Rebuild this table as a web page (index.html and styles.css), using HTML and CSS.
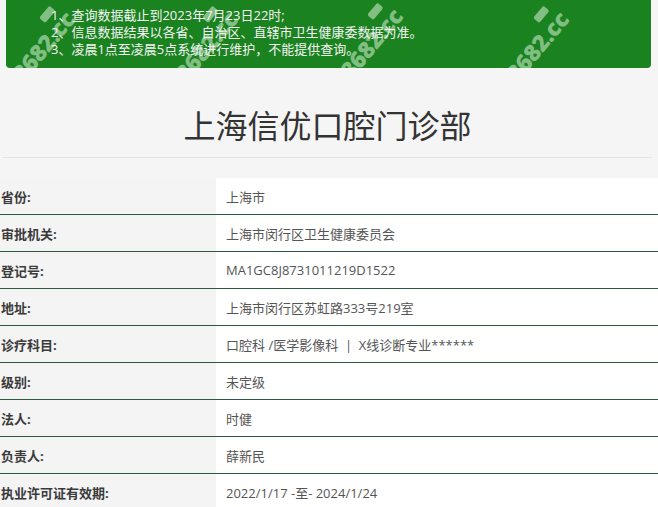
FILE: index.html
```html
<!DOCTYPE html>
<html lang="zh-CN">
<head>
<meta charset="utf-8">
<title>上海信优口腔门诊部</title>
<link rel="stylesheet" href="styles.css">
</head>
<body>
<div class="notice">
  <p>1、查询数据截止到2023年7月23日22时;</p>
  <p>2、信息数据结果以各省、自治区、直辖市卫生健康委数据为准。</p>
  <p>3、凌晨1点至凌晨5点系统进行维护，不能提供查询。</p>
  <span class="wm wm1" aria-hidden="true">8682.cc<i class="wm-badge"></i></span>
  <span class="wm wm2" aria-hidden="true">8682.cc<i class="wm-badge"></i></span>
  <span class="wm wm3" aria-hidden="true">8682.cc<i class="wm-badge"></i></span>
  <span class="wm wm4" aria-hidden="true">8682.cc<i class="wm-badge"></i></span>
</div>

<h1 class="title">上海信优口腔门诊部</h1>

<div class="info">
  <div class="row"><div class="label">省份:</div><div class="value">上海市</div></div>
  <div class="row"><div class="label">审批机关:</div><div class="value">上海市闵行区卫生健康委员会</div></div>
  <div class="row"><div class="label">登记号:</div><div class="value">MA1GC8J8731011219D1522</div></div>
  <div class="row"><div class="label">地址:</div><div class="value">上海市闵行区苏虹路333号219室</div></div>
  <div class="row"><div class="label">诊疗科目:</div><div class="value">口腔科 /医学影像科 &nbsp;| &nbsp;X线诊断专业******</div></div>
  <div class="row"><div class="label">级别:</div><div class="value">未定级</div></div>
  <div class="row"><div class="label">法人:</div><div class="value">时健</div></div>
  <div class="row"><div class="label">负责人:</div><div class="value">薛新民</div></div>
  <div class="row"><div class="label">执业许可证有效期:</div><div class="value">2022/1/17 -至- 2024/1/24</div></div>
</div>
</body>
</html>
```

FILE: styles.css
```css
html, body {
  margin: 0;
  padding: 0;
}
body {
  background: #f5f5f5;
  font-family: "Open Sans", "Noto Sans CJK SC", sans-serif;
  font-size: 13px;
  color: #333;
}
.notice {
  position: relative;
  overflow: hidden;
  margin: 0 7px 0 6px;
  padding: 7px 0 10px 45px;
  background: #1b8220;
  border-radius: 0 0 4px 4px;
  color: #f4f4f4;
  line-height: 17px;
}
.notice p {
  margin: 0;
  position: relative;
  z-index: 1;
}
.wm {
  position: absolute;
  font-family: "Open Sans", sans-serif;
  font-weight: 800;
  font-size: 23px;
  line-height: 24px;
  color: rgba(200, 232, 198, 0.6);
  transform: rotate(-50deg);
  transform-origin: center;
  white-space: nowrap;
  letter-spacing: -0.5px;
}
.wm-badge {
  position: absolute;
  right: 6px;
  top: -9px;
  width: 16px;
  height: 8px;
  border-radius: 2px;
  background: rgba(200, 232, 198, 0.6);
}
.wm1 { left: -4px; top: 34px; }
.wm2 { left: 159px; top: 34px; }
.wm3 { left: 324px; top: 31px; }
.wm4 { left: 490px; top: 34px; }

.title {
  margin: 36px 6px 0 3px;
  padding-bottom: 13px;
  border-bottom: 1px solid #e4e4e4;
  text-align: center;
  font-family: "Noto Sans CJK SC", sans-serif;
  font-size: 32px;
  font-weight: 400;
  line-height: 40px;
  color: #333;
}
.info {
  margin-top: 20px;
}
.row {
  display: grid;
  grid-template-columns: 216px 1fr;
  height: 37px;
  box-sizing: border-box;
  border-bottom: 1px solid #2c5a3f;
}
.label {
  display: flex;
  align-items: center;
  padding-left: 1px;
  background: #f4f4f4;
  font-weight: 700;
  color: #3a3a3a;
}
.value {
  display: flex;
  align-items: center;
  padding-left: 10px;
  background: #fff;
  color: #555;
}
```
